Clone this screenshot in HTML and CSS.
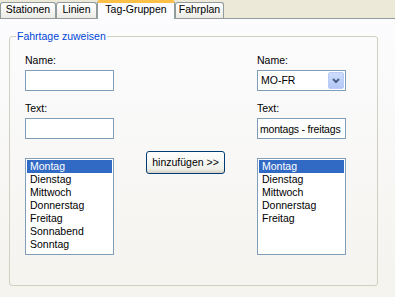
FILE: index.html
```html
<!DOCTYPE html>
<html lang="de">
<head>
    <meta charset="UTF-8">
    <meta name="viewport" content="width=device-width, initial-scale=1.0">
    <title>Tag-Gruppen</title>
    <link rel="stylesheet" href="styles.css">
</head>
<body>
    <!-- Reiter -->
    <div class="tabs">
        <div class="tab tab-stationen">Stationen</div>
        <div class="tab tab-linien">Linien</div>
        <div class="tab active">Tag-Gruppen</div>
        <div class="tab tab-fahrplan">Fahrplan</div>
    </div>

    <div class="panel">
        <fieldset class="group">
            <legend>Fahrtage zuweisen</legend>
            <div class="cols">
                <div class="col">
                    <label>Name:</label>
                    <input class="field" type="text">
                    <label class="second">Text:</label>
                    <input class="field" type="text">
                    <ul class="list">
                        <li class="sel">Montag</li>
                        <li>Dienstag</li>
                        <li>Mittwoch</li>
                        <li>Donnerstag</li>
                        <li>Freitag</li>
                        <li>Sonnabend</li>
                        <li>Sonntag</li>
                    </ul>
                </div>

                <div class="mid">
                    <button class="add">hinzufügen &gt;&gt;</button>
                </div>

                <div class="col">
                    <label>Name:</label>
                    <div class="combo">
                        <span>MO-FR</span>
                        <span class="drop">
                            <svg width="14" height="15" viewBox="0 0 14 15">
                                <polyline points="4,6 7,9 10,6" fill="none" stroke="#4d6185" stroke-width="2"/>
                            </svg>
                        </span>
                    </div>
                    <label class="second">Text:</label>
                    <input class="field tight" type="text" value="montags - freitags">
                    <ul class="list">
                        <li class="sel">Montag</li>
                        <li>Dienstag</li>
                        <li>Mittwoch</li>
                        <li>Donnerstag</li>
                        <li>Freitag</li>
                    </ul>
                </div>
            </div>
        </fieldset>
    </div>
</body>
</html>
```

FILE: styles.css
```css
/* Grundstil */
body {
    margin: 0;
    width: 395px;
    height: 297px;
    overflow: hidden;
    background-color: #ece9d8;
    font-family: "Liberation Sans", Arial, sans-serif;
    font-size: 10.5px;
    line-height: 13px;
    color: #000;
}

/* Reiter */
.tabs {
    display: flex;
    align-items: flex-end;
    height: 18px;
    border-bottom: 1px solid #919b9c;
}
.tab {
    box-sizing: border-box;
    height: 16px;
    padding: 0 0 2px;
    border: 1px solid #919b9c;
    border-bottom: none;
    border-radius: 3px 3px 0 0;
    background: linear-gradient(#ffffff, #ecebe6);
    text-align: center;
    white-space: nowrap;
}
.tab-stationen {
    width: 56px;
}
.tab-linien {
    width: 41px;
}
.tab-fahrplan {
    width: 49px;
}
.tab.active {
    width: 78px;
    height: 19px;
    margin-bottom: -1px;
    padding-top: 0;
    border-top: 3px solid #fcc048;
    background: #fcfcfe;
}

/* Inhalt */
.panel {
    height: 278px;
    padding: 11px 17px 0 9px;
    box-sizing: border-box;
    background: linear-gradient(#fcfcfe, #f4f3ee);
}
.group {
    margin: 0;
    padding: 0;
    border: 1px solid #d0d0bf;
    border-radius: 3px;
}
.group legend {
    margin-left: 6px;
    padding: 0 1px;
    color: #0046d5;
}
.cols {
    display: grid;
    grid-template-columns: 89px 1fr 89px;
    padding: 11px 31px 30px 15px;
}
.col {
    display: flex;
    flex-direction: column;
}
.col .second {
    margin-top: 11px;
}
.field,
.combo {
    box-sizing: border-box;
    width: 89px;
    height: 21px;
    margin-top: 3px;
    border: 1px solid #7f9db9;
    background: #fff;
    font: inherit;
    padding: 0 3px;
}
.field.tight {
    padding: 0 1px 0 2px;
    letter-spacing: -0.2px;
}
.combo {
    display: flex;
    align-items: center;
    justify-content: space-between;
    padding-right: 1px;
}
.drop {
    display: flex;
    align-items: center;
    justify-content: center;
    box-sizing: border-box;
    width: 16px;
    height: 17px;
    border: 1px solid #b9cbf6;
    border-radius: 2px;
    background: linear-gradient(#cddcfd, #b4c8f7);
}
.list {
    box-sizing: border-box;
    height: 97px;
    margin: 19px 0 0;
    padding: 1px;
    list-style: none;
    border: 1px solid #7f9db9;
    background: #fff;
}
.list li {
    padding-left: 3px;
}
.list .sel {
    background-color: #316ac5;
    color: #fff;
}

.mid {
    padding: 97px 0 0 32px;
}
.add {
    width: 79px;
    height: 23px;
    padding: 0;
    border: 1px solid #003c74;
    border-radius: 3px;
    background: linear-gradient(#ffffff, #f0f0ea 80%, #d6d0c5);
    font: inherit;
    color: #000;
}
```
